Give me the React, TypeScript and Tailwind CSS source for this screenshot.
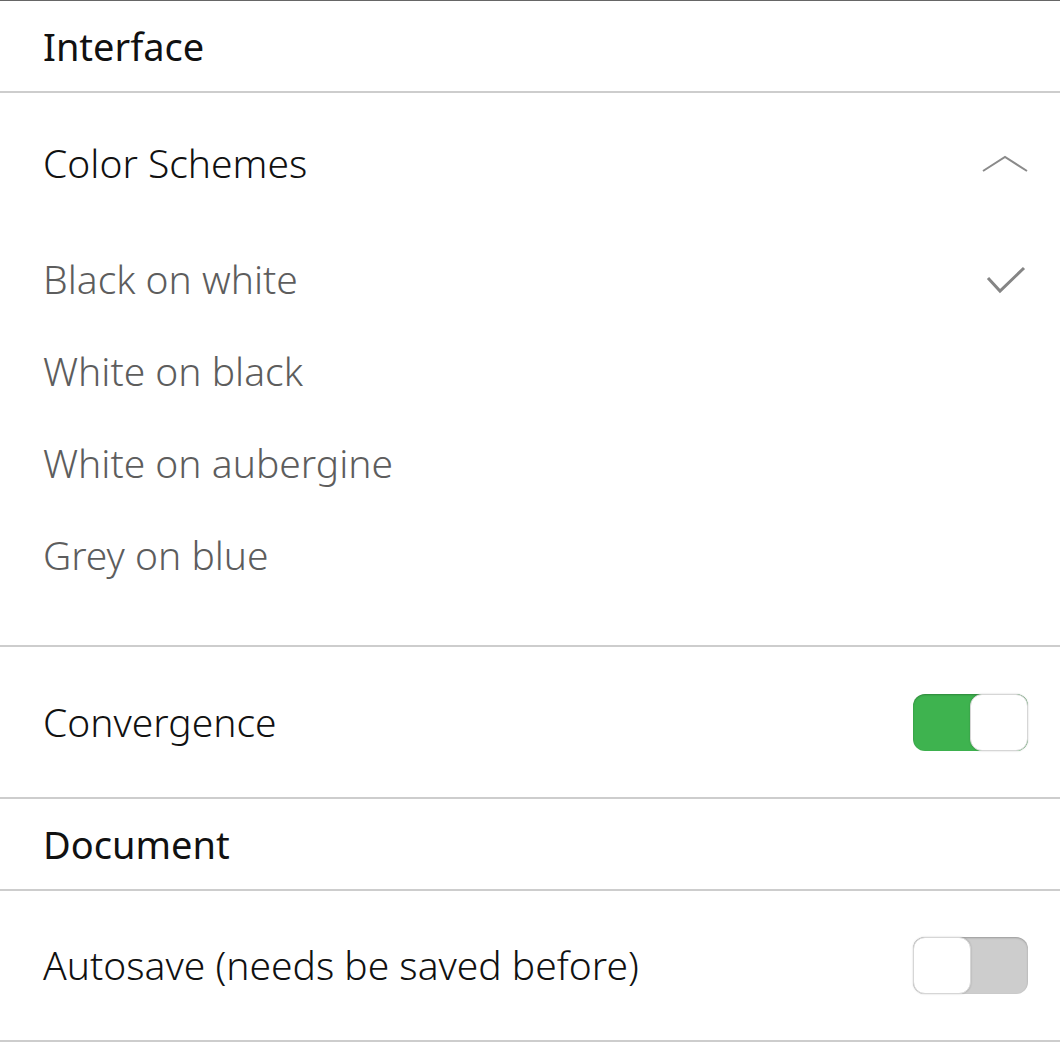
import React from "react";

function Switch({ on }: { on: boolean }) {
  return (
    <div
      className={
        "relative w-[115px] h-[57px] rounded-[12px] shadow-[inset_0_1px_2px_rgba(0,0,0,0.25)] " +
        (on ? "bg-[#3eb34f]" : "bg-[#cdcdcd]")
      }
    >
      <div
        className={
          "absolute top-0 h-[57px] w-[58px] rounded-[12px] bg-white border border-[#d6d6d6] shadow-[0_0_2px_rgba(0,0,0,0.2)] " +
          (on ? "right-0" : "left-0")
        }
      />
    </div>
  );
}

const font = { fontFamily: '"Noto Sans", "Open Sans", sans-serif' };

export default function App() {
  return (
    <div className="w-[1060px] bg-white border-t border-[#666]" style={font}>
      <div className="h-[92px] flex items-center px-[43px] text-[#111] text-[38px] border-b-2 border-[#cdcdcd]">
        Interface
      </div>
      <div className="border-b-2 border-[#cdcdcd] pb-[44px]">
        <div className="h-[140px] flex items-center justify-between pl-[43px] pr-[32px] text-[#111] text-[39px] font-light">
          <span>Color Schemes</span>
          <svg width="46" height="18" viewBox="0 0 46 18" fill="none" className="mt-[2px]">
            <path d="M1 16 L23 2 L45 16" stroke="#8a8a8a" strokeWidth="2" />
          </svg>
        </div>
        {["Black on white", "White on black", "White on aubergine", "Grey on blue"].map((t, i) => (
          <div
            key={t}
            className="h-[92px] flex items-center justify-between pl-[43px] pr-[34px] text-[#5d5d5d] text-[39px] font-light"
          >
            <span>{t}</span>
            {i === 0 && (
              <svg width="40" height="28" viewBox="0 0 40 28" fill="none" className="mt-[2px]">
                <path d="M2 12 L14 25 L38 2" stroke="#858585" strokeWidth="3" />
              </svg>
            )}
          </div>
        ))}
      </div>
      <div className="h-[152px] flex items-center justify-between pl-[43px] pr-[32px] text-[#111] text-[39px] font-light border-b-2 border-[#cdcdcd]">
        <span>Convergence</span>
        <Switch on={true} />
      </div>
      <div className="h-[92px] flex items-center px-[43px] text-[#111] text-[38px] border-b-2 border-[#cdcdcd]">
        Document
      </div>
      <div className="h-[151px] flex items-center justify-between pl-[43px] pr-[32px] text-[#111] text-[39px] font-light border-b-2 border-[#cdcdcd]">
        <span>Autosave (needs be saved before)</span>
        <Switch on={false} />
      </div>
    </div>
  );
}
